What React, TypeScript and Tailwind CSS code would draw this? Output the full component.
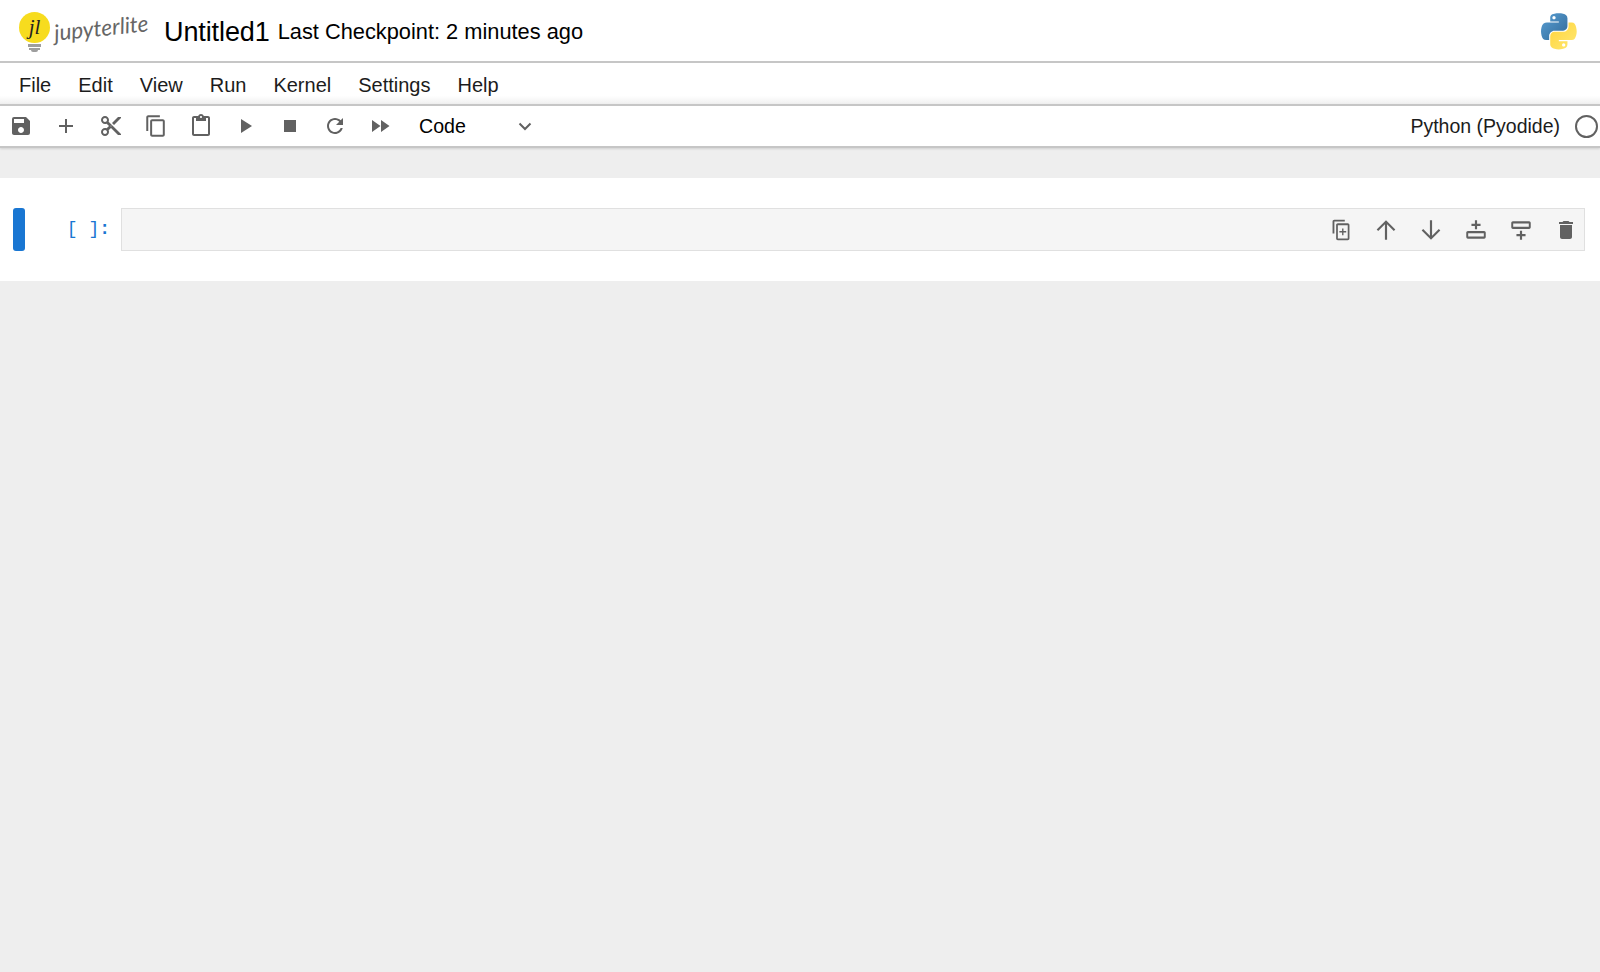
const fill = '#616161';

function Icon(props: { d: string; box?: string; size?: number; className?: string }) {
  const { d, box = '0 0 24 24', size = 24, className = '' } = props;
  return (
    <svg viewBox={box} width={size} height={size} className={className} fill={fill}>
      <path d={d} />
    </svg>
  );
}

const toolbarIcons: { name: string; d: string; box?: string }[] = [
  { name: 'save', d: 'M17 3H5a2 2 0 00-2 2v14c0 1.1.9 2 2 2h14a2 2 0 002-2V7l-4-4zm-5 16c-1.66 0-3-1.34-3-3s1.34-3 3-3 3 1.34 3 3-1.34 3-3 3zm3-10H5V5h10v4z' },
  { name: 'add', d: 'M19 13h-6v6h-2v-6H5v-2h6V5h2v6h6v2z' },
  { name: 'cut', d: 'M9.64 7.64c.23-.5.36-1.05.36-1.64 0-2.21-1.79-4-4-4S2 3.79 2 6s1.79 4 4 4c.59 0 1.14-.13 1.64-.36L10 12l-2.36 2.36C7.14 14.13 6.59 14 6 14c-2.21 0-4 1.79-4 4s1.79 4 4 4 4-1.79 4-4c0-.59-.13-1.14-.36-1.64L12 14l7 7h3v-1L9.64 7.64zM6 8c-1.1 0-2-.89-2-2s.9-2 2-2 2 .89 2 2-.9 2-2 2zm0 12c-1.1 0-2-.89-2-2s.9-2 2-2 2 .89 2 2-.9 2-2 2zm6-7.5c-.28 0-.5-.22-.5-.5s.22-.5.5-.5.5.22.5.5-.22.5-.5.5zM19 3l-6 6 2 2 7-7V3z' },
  { name: 'copy', box: '0 0 18 18', d: 'M11.9,1H3.2C2.4,1,1.7,1.7,1.7,2.5v10.2h1.5V2.5h8.7V1z M14.1,3.9h-8c-0.8,0-1.5,0.7-1.5,1.5v10.2c0,0.8,0.7,1.5,1.5,1.5h8 c0.8,0,1.5-0.7,1.5-1.5V5.4C15.6,4.6,14.9,3.9,14.1,3.9z M14.1,15.5h-8V5.4h8V15.5z' },
  { name: 'paste', d: 'M19 2h-4.18C14.4.84 13.3 0 12 0c-1.3 0-2.4.84-2.82 2H5c-1.1 0-2 .9-2 2v16c0 1.1.9 2 2 2h14c1.1 0 2-.9 2-2V4c0-1.1-.9-2-2-2zm-7 0c.55 0 1 .45 1 1s-.45 1-1 1-1-.45-1-1 .45-1 1-1zm7 18H5V4h2v3h10V4h2v16z' },
  { name: 'run', d: 'M8 5v14l11-7z' },
  { name: 'stop', d: 'M6 6h12v12H6z' },
  { name: 'restart', d: 'M17.65 6.35C16.2 4.9 14.21 4 12 4c-4.42 0-7.99 3.58-7.99 8s3.57 8 7.99 8c3.73 0 6.84-2.55 7.73-6h-2.08c-.82 2.33-3.04 4-5.65 4-3.31 0-6-2.69-6-6s2.69-6 6-6c1.66 0 3.14.69 4.22 1.78L13 11h7V4l-2.35 2.35z' },
  { name: 'fast', d: 'M4 18l8.5-6L4 6v12zm9-12v12l8.5-6L13 6z' },
];

const cellIcons: { name: string; d: string; size: number }[] = [
  { name: 'duplicate', size: 26, d: 'M15.5 2.5H5.8c-.9 0-1.6.7-1.6 1.6v11.2h1.7V4.2h9.6V2.5zM18.2 5.8H9.1c-.9 0-1.6.7-1.6 1.6v12.5c0 .9.7 1.6 1.6 1.6h9.1c.9 0 1.6-.7 1.6-1.6V7.4c0-.9-.7-1.6-1.6-1.6zm0 14.1H9.1V7.5h9.1v12.4zM13 10.5h1.3v2.5h2.5v1.3h-2.5v2.5H13v-2.5h-2.5V13H13v-2.5z' },
  { name: 'up', size: 26, d: 'M12 3l-8.6 8.6 1.4 1.4L11 6.8V21h2V6.8l6.2 6.2 1.4-1.4z' },
  { name: 'down', size: 26, d: 'M12 21l8.6-8.6-1.4-1.4L13 17.2V3h-2v14.2L4.8 11l-1.4 1.4z' },
  { name: 'insert-above', size: 26, d: 'M11 3h2v3.2h3.2v2H13v3h-2v-3H7.8v-2H11V3zM4.5 13h15c.8 0 1.5.7 1.5 1.5v4c0 .8-.7 1.5-1.5 1.5h-15c-.8 0-1.5-.7-1.500-1.500v-4c0-.8.7-1.500 1.500-1.500zm.3 1.900v3.200h14.400v-3.200H4.800z' },
  { name: 'insert-below', size: 26, d: 'M4.5 4h15c.8 0 1.5.7 1.5 1.500v4c0 .8-.7 1.500-1.500 1.500h-15C3.700 11 3 10.300 3 9.500v-4C3 4.700 3.700 4 4.500 4zm.3 1.900v3.200h14.400V5.900H4.800zM11 12.800h2v3h3.200v2H13V21h-2v-3.200H7.800v-2H11v-3z' },
  { name: 'delete', size: 24, d: 'M6 19c0 1.100.9 2 2 2h8c1.100 0 2-.9 2-2V7H6v12zM19 4h-3.500l-1-1h-5l-1 1H5v2h14V4z' },
];

const menus = ['File', 'Edit', 'View', 'Run', 'Kernel', 'Settings', 'Help'];

function PythonLogo() {
  return (
    <svg viewBox="0 0 112 113" width={36} height={37}>
      <defs>
        <linearGradient id="pyBlue" x1="0" y1="0" x2="1" y2="1">
          <stop offset="0" stopColor="#5a9fd4" />
          <stop offset="1" stopColor="#306998" />
        </linearGradient>
        <linearGradient id="pyYellow" x1="0" y1="0" x2="1" y2="1">
          <stop offset="0" stopColor="#ffd43b" />
          <stop offset="1" stopColor="#ffe873" />
        </linearGradient>
      </defs>
      <path fill="url(#pyBlue)" d="M54.919 0.001C50.335 0.022 45.957 0.413 42.106 1.095C30.760 3.099 28.700 7.295 28.700 15.032V25.250H55.500V28.657H28.700H18.642C10.853 28.657 4.033 33.339 1.900 42.245C-0.561 52.453 -0.670 58.823 1.900 69.476C3.805 77.405 8.354 83.054 16.143 83.054H25.358V70.810C25.358 61.966 33.011 54.165 42.106 54.165H68.875C76.327 54.165 82.275 48.029 82.275 40.545V15.032C82.275 7.769 76.148 2.313 68.875 1.095C64.272 0.329 59.496 -0.020 54.919 0.001ZM40.425 8.220C43.193 8.220 45.454 10.518 45.454 13.343C45.454 16.158 43.193 18.435 40.425 18.435C37.647 18.435 35.397 16.158 35.397 13.343C35.397 10.518 37.647 8.220 40.425 8.220Z" />
      <path fill="url(#pyYellow)" d="M85.638 28.657V40.557C85.638 49.780 77.818 57.543 68.875 57.543H42.106C34.774 57.543 28.700 63.818 28.700 71.161V96.674C28.700 103.935 35.014 108.205 42.106 110.291C50.598 112.788 58.742 113.239 68.875 110.291C75.611 108.340 82.275 104.414 82.275 96.674V86.462H55.500V83.054H82.275H95.678C103.467 83.054 106.370 77.621 109.079 69.476C111.877 61.090 111.758 53.025 109.079 42.245C107.154 34.484 103.477 28.657 95.678 28.657ZM70.550 93.305C73.328 93.305 75.578 95.582 75.578 98.397C75.578 101.222 73.328 103.520 70.550 103.520C67.782 103.520 65.521 101.222 65.521 98.397C65.521 95.582 67.782 93.305 70.550 93.305Z" />
    </svg>
  );
}

function JupyterLiteLogo() {
  return (
    <div className="flex w-[164px] shrink-0 items-center pl-[19px]">
      <div className="flex w-[31px] shrink-0 flex-col items-center">
        <div className="flex h-[31px] w-[31px] items-center justify-center rounded-full bg-[#f7dc1e] font-['Liberation_Serif',serif] text-[21px] italic leading-none text-[#222222]">
          jl
        </div>
        <div className="mt-[1px] h-[3px] w-[13px] bg-[#9e9e9e]" />
        <div className="mt-[1px] h-[2px] w-[11px] bg-[#9e9e9e]" />
        <div className="h-[2px] w-[7px] rounded-b bg-[#9e9e9e]" />
      </div>
      <span className="ml-[4px] -mt-[8px] -rotate-6 font-['Lato',sans-serif] text-[22.500px] italic leading-none text-[#666666]">
        jupyterlite
      </span>
    </div>
  );
}

export default function App() {
  return (
    <div className="flex h-[972px] w-[1600px] flex-col overflow-hidden bg-[#eeeeee] font-['Liberation_Sans',Arial,sans-serif] text-black">
      {/* Title bar */}
      <header className="flex h-[63px] shrink-0 items-center border-b-2 border-[#c6c6c6] bg-white pt-[3px]">
        <JupyterLiteLogo />
        <span className="text-[27px] leading-none tracking-[-0.1px]">Untitled1</span>
        <span className="ml-[8px] text-[21.800px] leading-none">Last Checkpoint: 2 minutes ago</span>
        <div className="ml-auto mr-[23px] -mt-[1px] flex">
          <PythonLogo />
        </div>
      </header>

      {/* Menu */}
      <nav className="flex h-[41px] shrink-0 items-center gap-[27px] bg-gradient-to-b from-white from-80% to-[#f0f0f0] pl-[19px] pt-[3px] text-[20px] text-[#1c1c1c]">
        {menus.map(m => <span key={m}>{m}</span>)}
      </nav>

      {/* Toolbar */}
      <div className="flex h-[44px] shrink-0 items-center border-y-2 border-[#c6c6c6] bg-white shadow-[0_1px_2px_rgba(0,0,0,0.12)]">
        <div className="flex items-center pl-[9px]">
          {toolbarIcons.map(ic => (
            <div key={ic.name} className="flex w-[44.900px] justify-start">
              <Icon d={ic.d} box={ic.box} />
            </div>
          ))}
        </div>
        <div className="ml-[6px] flex w-[115px] items-center justify-between text-[19.600px]">
          <span className="pt-[1px]">Code</span>
          <svg viewBox="0 0 18 18" width={18} height={18} fill="none" stroke={fill} strokeWidth={2}>
            <path d="M3.500 6.500L9 12l5.500-5.500" />
          </svg>
        </div>
        <span className="ml-auto pt-[1px] text-[19.500px] text-[#1c1c1c]">Python (Pyodide)</span>
        <div className="ml-[15px] mr-[2px] h-[23px] w-[23px] rounded-full border-2 border-[#616161]" />
      </div>

      {/* Notebook */}
      <main className="mt-[30px] flex h-[103px] shrink-0 items-center bg-white">
        <div className="ml-[13px] h-[43px] w-[12px] shrink-0 rounded-[3px] bg-[#1976d2]" />
        <div className="-mt-[1px] w-[96px] shrink-0 pr-[11px] text-right font-['Liberation_Mono',monospace] text-[18px] font-bold leading-none text-[#1976d2]">
          <span className="font-normal">[ ]</span>:
        </div>
        <div className="mr-[15px] flex h-[43px] flex-1 items-center justify-end gap-[19px] border border-[#e0e0e0] bg-[#f5f5f5] pr-[5px]">
          {cellIcons.map(ic => (
            <div key={ic.name} className="flex w-[26px] justify-center">
              <Icon d={ic.d} size={ic.size} />
            </div>
          ))}
        </div>
      </main>
    </div>
  );
}
